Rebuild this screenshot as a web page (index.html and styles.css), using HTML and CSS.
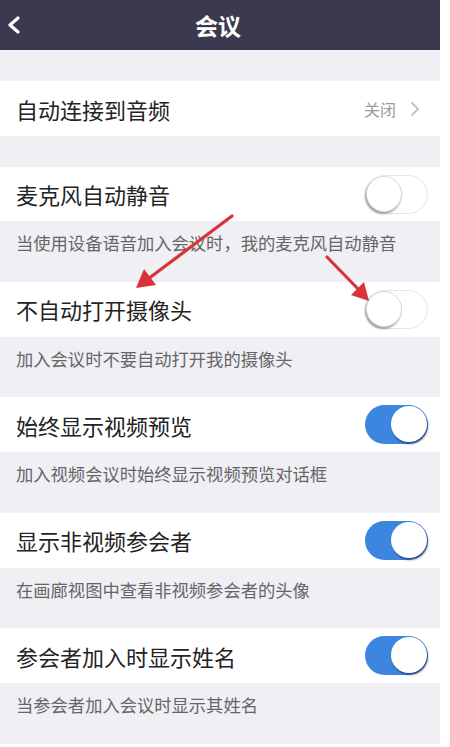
FILE: index.html
```
<!DOCTYPE html>
<html lang="zh-CN">
<head>
<meta charset="utf-8">
<link rel="stylesheet" href="styles.css">
</head>
<body>
<div class="screen">
  <div class="header">
    <svg class="back" width="16" height="18" viewBox="0 0 16 18"><path d="M12 2 L4 9 L12 16" fill="none" stroke="#fff" stroke-width="3.2" stroke-linecap="round" stroke-linejoin="round"/></svg>
    <div class="title">会议</div>
  </div>
  <div class="gap"></div>
  <div class="row">
    <div class="label">自动连接到音频</div>
    <div class="value">关闭<svg class="chev" width="10" height="16" viewBox="0 0 10 16"><path d="M2 2 L8 8 L2 14" fill="none" stroke="#c4c4c8" stroke-width="2" stroke-linecap="round" stroke-linejoin="round"/></svg></div>
  </div>
  <div class="gap"></div>
  <div class="row r54">
    <div class="label">麦克风自动静音</div>
    <div class="toggle off"><span class="knob"></span></div>
  </div>
  <div class="desc">当使用设备语音加入会议时，我的麦克风自动静音</div>
  <div class="row">
    <div class="label">不自动打开摄像头</div>
    <div class="toggle off"><span class="knob"></span></div>
  </div>
  <div class="desc">加入会议时不要自动打开我的摄像头</div>
  <div class="row">
    <div class="label">始终显示视频预览</div>
    <div class="toggle on"><span class="knob"></span></div>
  </div>
  <div class="desc">加入视频会议时始终显示视频预览对话框</div>
  <div class="row">
    <div class="label">显示非视频参会者</div>
    <div class="toggle on"><span class="knob"></span></div>
  </div>
  <div class="desc">在画廊视图中查看非视频参会者的头像</div>
  <div class="row">
    <div class="label">参会者加入时显示姓名</div>
    <div class="toggle on"><span class="knob"></span></div>
  </div>
  <div class="desc">当参会者加入会议时显示其姓名</div>
  <svg class="arrows" width="440" height="747" viewBox="0 0 440 747">
    <g stroke="#d8333b" stroke-width="3.2" stroke-linecap="round" fill="none">
      <path d="M232 216 L148 279"/>
      <path d="M327 257 L361 292"/>
    </g>
    <g fill="#d8333b">
      <polygon points="136,288 144,269 156,285"/>
      <polygon points="369,301 351,295 364,282"/>
    </g>
  </svg>
</div>
</body>
</html>
```
FILE: styles.css
```
html, body {
  margin: 0;
  padding: 0;
  background: #ffffff;
}
body {
  font-family: "Noto Sans CJK SC", "Noto Sans", sans-serif;
  width: 450px;
  height: 747px;
  overflow: hidden;
}
.screen {
  position: relative;
  width: 440px;
  height: 744px;
  background: #efeff4;
}
.header {
  position: relative;
  height: 50px;
  background: #3a3950;
  display: flex;
  align-items: center;
  justify-content: center;
}
.back {
  position: absolute;
  left: 6px;
  top: 16px;
}
.title {
  color: #ffffff;
  font-size: 23px;
  font-weight: 700;
  margin-left: -4px;
}
.gap {
  height: 31px;
}
.row {
  height: 55px;
  background: #ffffff;
  display: flex;
  align-items: center;
  justify-content: space-between;
  padding: 0 12px 0 16px;
}
.row.r54 {
  height: 54px;
}
.label {
  font-size: 22px;
  color: #232323;
  line-height: 1;
}
.value {
  display: flex;
  align-items: center;
  font-size: 16px;
  color: #9a9a9a;
  gap: 14px;
  padding-right: 8px;
}
.desc {
  height: 60.5px;
  box-sizing: border-box;
  padding: 11px 0 0 16px;
  font-size: 17.3px;
  line-height: 22px;
  color: #666666;
}
.toggle {
  position: relative;
  width: 63px;
  height: 39px;
  box-sizing: border-box;
  border-radius: 20px;
}
.toggle.off {
  background: #ffffff;
  border: 1.5px solid #e6e6e8;
}
.toggle.on {
  background: #3d86df;
}
.knob {
  position: absolute;
  top: 1px;
  width: 36px;
  height: 36px;
  border-radius: 50%;
  background: #ffffff;
  box-sizing: border-box;
}
.toggle.off .knob {
  left: 0px;
  top: 0px;
  border: 1px solid #d8d8d8;
  box-shadow: -1px 2px 2px rgba(0,0,0,0.35);
}
.toggle.on .knob {
  right: 1px;
  box-shadow: 1px 2px 2px rgba(20,30,60,0.55);
}
.arrows {
  position: absolute;
  left: 0;
  top: 0;
  pointer-events: none;
}
```
